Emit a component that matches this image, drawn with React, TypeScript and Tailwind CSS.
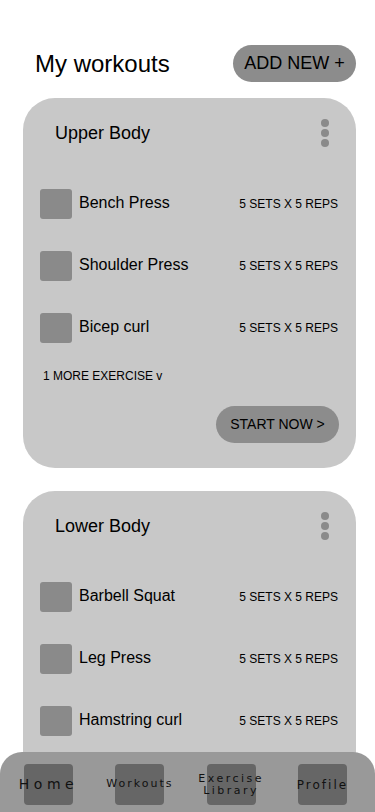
const font = { fontFamily: '"Liberation Sans", Arial, sans-serif' };

type Exercise = { name: string; sets: string };

const workouts: { title: string; exercises: Exercise[]; more?: string }[] = [
  {
    title: "Upper Body",
    exercises: [
      { name: "Bench Press", sets: "5 SETS X 5 REPS" },
      { name: "Shoulder Press", sets: "5 SETS X 5 REPS" },
      { name: "Bicep curl", sets: "5 SETS X 5 REPS" },
    ],
    more: "1 MORE EXERCISE v",
  },
  {
    title: "Lower Body",
    exercises: [
      { name: "Barbell Squat", sets: "5 SETS X 5 REPS" },
      { name: "Leg Press", sets: "5 SETS X 5 REPS" },
      { name: "Hamstring curl", sets: "5 SETS X 5 REPS" },
    ],
    more: "1 MORE EXERCISE v",
  },
];

function Dots() {
  return (
    <div className="flex flex-col gap-[2px]">
      <span className="h-[8px] w-[8px] rounded-full bg-[#8a8a8a]" />
      <span className="h-[8px] w-[8px] rounded-full bg-[#8a8a8a]" />
      <span className="h-[8px] w-[8px] rounded-full bg-[#8a8a8a]" />
    </div>
  );
}

function WorkoutCard({ title, exercises, more }: { title: string; exercises: Exercise[]; more?: string }) {
  return (
    <div className="ml-[23px] mr-[19px] rounded-[32px] bg-[#c8c8c8] pt-[21px] pb-[25px] pl-[17px] pr-[17px]">
      <div className="flex items-center justify-between pl-[15px] pr-[10px]">
        <h2 className="text-[18px] text-black">{title}</h2>
        <Dots />
      </div>
      <div className="mt-[42px] flex flex-col gap-[32px]">
        {exercises.map((ex) => (
          <div key={ex.name} className="flex h-[30px] items-center">
            <div className="h-[30px] w-[32px] shrink-0 rounded-[3px] bg-[#8a8a8a]" />
            <span className="ml-[7px] -mt-[3px] flex-1 text-[16px] text-black">{ex.name}</span>
            <span className="whitespace-nowrap pr-px text-[12px] text-black">{ex.sets}</span>
          </div>
        ))}
      </div>
      {more && <div className="mt-[25px] pl-[3px] text-[12px] leading-[16px] text-black">{more}</div>}
      <div className="mt-[22px] flex justify-end">
        <button
          type="button"
          className="h-[37px] w-[123px] rounded-full bg-[#8c8c8c] text-[14px] text-black"
        >
          START NOW &gt;
        </button>
      </div>
    </div>
  );
}

const navItems = [
  { label: ["Home"], cls: "text-[14px] tracking-[4.5px]" },
  { label: ["Workouts"], cls: "text-[11px] tracking-[2px]" },
  { label: ["Exercise", "Library"], cls: "text-[11px] leading-[12px] tracking-[2.5px]" },
  { label: ["Profile"], cls: "text-[12px] tracking-[2px]" },
];

export default function App() {
  return (
    <div className="relative h-[812px] w-full overflow-hidden bg-white" style={font}>
      <div className="flex h-[37px] items-center justify-between mt-[45px] pl-[35px] pr-[19px]">
        <h1 className="text-[24px] text-black">My workouts</h1>
        <button type="button" className="h-[37px] w-[123px] rounded-full bg-[#8c8c8c] text-[18px] text-black">
          ADD NEW +
        </button>
      </div>
      <div className="mt-[16px] flex flex-col gap-[23px]">
        {workouts.map((w) => (
          <WorkoutCard key={w.title} {...w} />
        ))}
      </div>

      <nav
        className="absolute bottom-0 left-0 right-0 flex h-[60px] items-start justify-between rounded-t-[22px] bg-[#999999] pt-[12px] pl-[24px] pr-[28px]"
        style={{ fontFamily: '"DejaVu Sans", sans-serif' }}
      >
        {navItems.map((item) => (
          <div key={item.label.join(" ")} className="relative flex h-[41px] w-[49px] items-center justify-center rounded-[4px] bg-[#666666]">
            <span className={`absolute whitespace-nowrap text-center text-[#111111] ${item.cls}`}>
              {item.label.map((l) => (
                <span key={l} className="block">
                  {l}
                </span>
              ))}
            </span>
          </div>
        ))}
      </nav>
    </div>
  );
}
